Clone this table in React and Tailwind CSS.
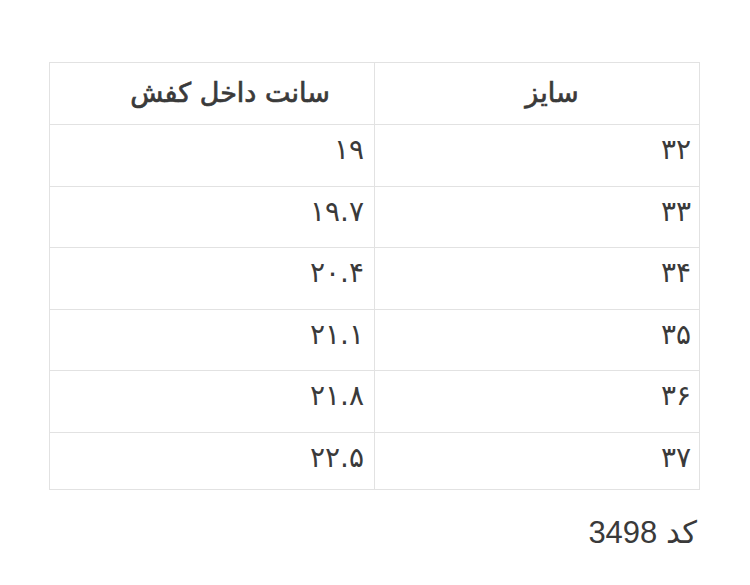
// ── Size chart data ──────────────────────────────────────────────────────────
const SIZE_ROWS = [
  { size: "۳۲", cm: "۱۹", h: "h-[62px]" },
  { size: "۳۳", cm: "۱۹.۷", h: "h-[61px]" },
  { size: "۳۴", cm: "۲۰.۴", h: "h-[62px]" },
  { size: "۳۵", cm: "۲۱.۱", h: "h-[61px]" },
  { size: "۳۶", cm: "۲۱.۸", h: "h-[62px]" },
  { size: "۳۷", cm: "۲۲.۵", h: "h-[57px]" },
];

export default function App() {
  return (
    <div
      dir="rtl"
      className="w-[750px] h-[585px] bg-white pt-[62px] px-[50px] text-[#3a3a3a]"
      style={{ fontFamily: '"DejaVu Sans", sans-serif' }}
    >
      {/* ── Table ─────────────────────────────────────────────────────────── */}
      <table className="w-[650px] border-collapse table-fixed">
        <thead>
          <tr className="h-[62px]">
            <th className="w-[325px] border border-[#e2e2e2] pl-[30px] text-center text-[27px] font-normal [-webkit-text-stroke:0.7px] align-middle">
              سایز
            </th>
            <th className="w-[325px] border border-[#e2e2e2] pl-[36px] text-center text-[27px] font-normal [-webkit-text-stroke:0.7px] align-middle">
              سانت داخل کفش
            </th>
          </tr>
        </thead>
        <tbody>
          {SIZE_ROWS.map((row) => (
            <tr key={row.size} className={row.h}>
              <td className="border border-[#e2e2e2] pr-[8px] pt-[7px] text-right align-top text-[28px] leading-[36px]">
                {row.size}
              </td>
              <td className="border border-[#e2e2e2] pr-[10px] pt-[7px] text-right align-top text-[28px] leading-[36px]">
                {row.cm}
              </td>
            </tr>
          ))}
        </tbody>
      </table>

      {/* ── Product code ──────────────────────────────────────────────────── */}
      <p
        className="mt-[24px] pr-[3px] text-[31px] leading-[38px] text-[#3a3a3a]"
        style={{ fontFamily: '"Liberation Sans", "DejaVu Sans", sans-serif' }}
      >
        کد 3498
      </p>
    </div>
  );
}
